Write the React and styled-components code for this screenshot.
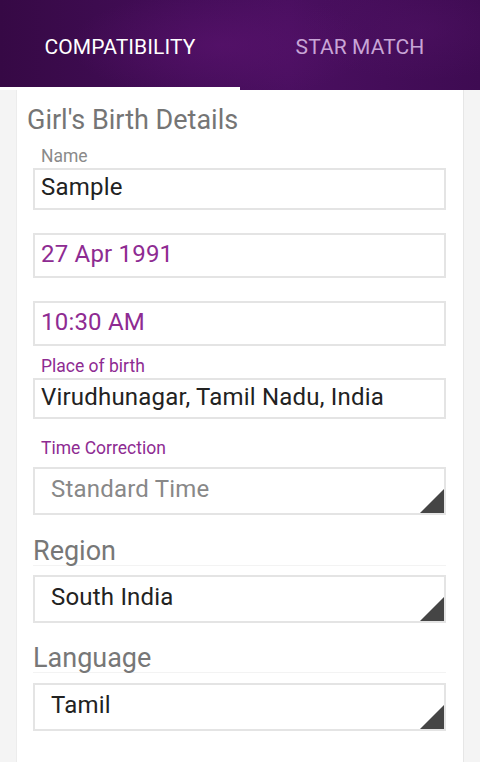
import React from "react";
import styled, { createGlobalStyle } from "styled-components";

const GlobalStyle = createGlobalStyle`
  html, body {
    margin: 0;
    padding: 0;
    background: #f4f4f4;
    font-family: Roboto, "Noto Sans", sans-serif;
  }
`;

const Page = styled.div`
  width: 480px;
  height: 762px;
  overflow: hidden;
  display: flex;
  flex-direction: column;
  background: #f4f4f4;
`;

const TabBar = styled.div`
  height: 90px;
  flex-shrink: 0;
  display: flex;
  background:
    radial-gradient(ellipse 150px 55px at 220px 45px, rgba(95, 20, 115, 0.5), transparent),
    radial-gradient(ellipse 120px 50px at 420px 30px, rgba(85, 20, 105, 0.35), transparent),
    linear-gradient(90deg, #360945 0%, #440d59 40%, #4a0f60 60%, #3e0b52 100%);
`;

const Tab = styled.div`
  flex: 1;
  display: flex;
  align-items: center;
  justify-content: center;
  padding-top: 7px;
  box-sizing: border-box;
  font-size: 21px;
  letter-spacing: 0.1px;
  color: ${(p) => (p.$active ? "#ffffff" : "#c8a5d6")};
  border-bottom: 3px solid ${(p) => (p.$active ? "#ffffff" : "transparent")};
`;

const Card = styled.div`
  flex: 1;
  margin: 0 16px;
  padding: 15px 17px 0 16px;
  background: #ffffff;
  border-left: 1px solid #ececec;
  border-right: 1px solid #e6e6e6;
  display: flex;
  flex-direction: column;
`;

const Title = styled.div`
  margin-left: -6px;
  font-size: 27px;
  line-height: 30px;
  color: #757575;
`;

const Label = styled.div`
  margin-top: ${(p) => p.$mt}px;
  padding-left: 8px;
  font-size: 17.5px;
  line-height: 20px;
  color: ${(p) => (p.$accent ? "#8e2b92" : "#8a8a8a")};
`;

const SectionLabel = styled.div`
  margin-top: ${(p) => p.$mt}px;
  font-size: 27px;
  line-height: 28px;
  color: #777777;
  border-bottom: 1px solid #f3f3f3;
`;

const Field = styled.div`
  position: relative;
  margin-top: ${(p) => p.$mt}px;
  height: ${(p) => p.$h}px;
  box-sizing: border-box;
  border: 2px solid #e4e4e4;
  display: flex;
  align-items: center;
  padding: 0 0 4px ${(p) => (p.$select ? 16 : 6)}px;
  font-size: 24px;
  letter-spacing: 0.2px;
  color: ${(p) => p.$color || "#222222"};
`;

const Corner = styled.span`
  position: absolute;
  right: 0;
  bottom: 0;
  width: 24px;
  height: 24px;
  background: #454545;
  clip-path: polygon(100% 0, 100% 100%, 0 100%);
`;

export default function App() {
  return (
    <Page>
      <GlobalStyle />
      <TabBar>
        <Tab $active>COMPATIBILITY</Tab>
        <Tab>STAR MATCH</Tab>
      </TabBar>
      <Card>
        <Title>Girl's Birth Details</Title>
        <Label $mt={11}>Name</Label>
        <Field $mt={2} $h={42}>Sample</Field>
        <Field $mt={23} $h={45} $color="#8e2b92">27 Apr 1991</Field>
        <Field $mt={23} $h={45} $color="#8e2b92">10:30 AM</Field>
        <Label $mt={10} $accent>Place of birth</Label>
        <Field $mt={2} $h={41}>Virudhunagar, Tamil Nadu, India</Field>
        <Label $mt={19} $accent>Time Correction</Label>
        <Field $mt={9} $h={48} $select $color="#888888">
          Standard Time
          <Corner />
        </Field>
        <SectionLabel $mt={22}>Region</SectionLabel>
        <Field $mt={9} $h={48} $select>
          South India
          <Corner />
        </Field>
        <SectionLabel $mt={21}>Language</SectionLabel>
        <Field $mt={10} $h={48} $select>
          Tamil
          <Corner />
        </Field>
      </Card>
    </Page>
  );
}
